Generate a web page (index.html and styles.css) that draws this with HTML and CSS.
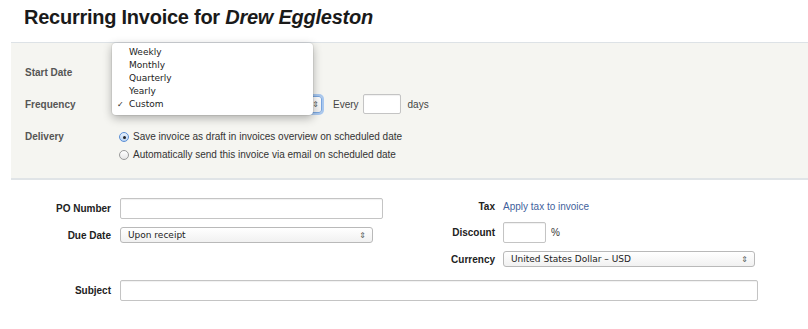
FILE: index.html
```html
<!DOCTYPE html>
<html lang="en">
<head>
  <meta charset="UTF-8">
  <title>Recurring Invoice for Drew Eggleston</title>
  <link rel="stylesheet" href="styles.css">
</head>
<body>

  <h1 class="title">Recurring Invoice for <em>Drew Eggleston</em></h1>

  <div class="schedule">
    <div class="row row-start">
      <span class="label">Start Date</span>
      <span class="date-ghost"></span>
    </div>
    <div class="row row-freq">
      <span class="label">Frequency</span>
      <span class="select select-freq"><span class="arrows">&#8661;</span></span>
      <span class="every">Every</span>
      <span class="input input-days"></span>
      <span class="days">days</span>
    </div>
    <div class="row row-delivery">
      <span class="label">Delivery</span>
      <div class="radios">
        <label class="radio"><span class="dot checked"></span>Save invoice as draft in invoices overview on scheduled date</label>
        <label class="radio"><span class="dot"></span>Automatically send this invoice via email on scheduled date</label>
      </div>
    </div>

    <ul class="menu">
      <li>Weekly</li>
      <li>Monthly</li>
      <li>Quarterly</li>
      <li>Yearly</li>
      <li class="current"><span class="check">&#10003;</span>Custom</li>
    </ul>
  </div>

  <div class="details">
    <div class="cols">
      <div class="col-left">
        <div class="field field-po">
          <span class="flabel">PO Number</span>
          <span class="input input-po"></span>
        </div>
        <div class="field field-due">
          <span class="flabel">Due Date</span>
          <span class="select select-due">Upon receipt<span class="arrows">&#8661;</span></span>
        </div>
      </div>
      <div class="col-right">
        <div class="field field-tax">
          <span class="flabel rlabel">Tax</span>
          <a class="link" href="#">Apply tax to invoice</a>
        </div>
        <div class="field field-discount">
          <span class="flabel rlabel">Discount</span>
          <span class="input input-discount"></span>
          <span class="pct">%</span>
        </div>
        <div class="field field-currency">
          <span class="flabel rlabel">Currency</span>
          <span class="select select-currency">United States Dollar &ndash; USD<span class="arrows">&#8661;</span></span>
        </div>
      </div>
    </div>
    <div class="field field-subject">
      <span class="flabel">Subject</span>
      <span class="input input-subject"></span>
    </div>
  </div>

</body>
</html>
```

FILE: styles.css
```css
body { margin: 0; font-family: "Liberation Sans", Arial, sans-serif; font-size: 10px; color: #333; background: #fff; width: 808px; height: 329px; overflow: hidden; }

.title { margin: 0; padding: 6px 0 0 24px; height: 36px; font-size: 20px; font-weight: bold; color: #1a1a1a; letter-spacing: -0.25px; }
.title em { font-style: italic; }

.schedule { position: relative; margin-left: 11px; height: 135px; background: #f5f5f1; border-top: 1px solid #dde2e6; border-bottom: 2px solid #e0e4e7; }
.row { display: flex; align-items: center; padding-left: 14px; }
.label { width: 93px; font-weight: bold; color: #555; flex: none; }
.row-start { height: 20px; margin-top: 19px; }
.date-ghost { width: 66px; height: 20px; background: #ececea; border-radius: 3px; }
.row-freq { height: 20px; margin-top: 12px; }
.row-delivery { align-items: flex-start; margin-top: 16px; }
.row-delivery .label { padding-top: 1px; }

.select { display: flex; align-items: center; justify-content: space-between; height: 15px; padding: 0 6px 0 7px; background: linear-gradient(#fff, #f1f1f1); border: 1px solid #b9b9b9; border-radius: 3px; font-family: "DejaVu Sans", sans-serif; font-size: 9px; color: #222; box-sizing: border-box; }
.arrows { font-size: 8px; color: #555; }
.select-freq { width: 204px; height: 17px; padding-right: 2px; justify-content: flex-end; border-color: #7aa7e0; box-shadow: 0 0 0 2px #a9c8ef; }
.every { margin-left: 11px; color: #444; }
.input { display: block; background: #fff; border: 1px solid #c4c4c4; border-radius: 2px; box-sizing: border-box; box-shadow: inset 0 1px 1px rgba(0,0,0,0.06); }
.input-days { width: 38px; height: 20px; margin-left: 4px; }
.days { margin-left: 7px; color: #444; }

.radios { display: flex; flex-direction: column; gap: 5px; }
.radio { display: flex; align-items: center; color: #333; line-height: 13px; }
.dot { width: 10px; height: 10px; margin: 0 4px 0 1px; border: 1px solid #9a9a9a; border-radius: 50%; background: linear-gradient(#fff, #e6e6e6); box-sizing: border-box; position: relative; }
.dot.checked { border-color: #5b8fd6; background: linear-gradient(#e6f0fc, #b9d3f3); }
.dot.checked::after { content: ""; position: absolute; left: 3px; top: 3px; width: 3px; height: 3px; border-radius: 50%; background: #222; }

.menu { position: absolute; left: 101px; top: 0; width: 201px; height: 72px; margin: 0; padding: 3px 0 0; list-style: none; background: #fff; border-radius: 4px; box-shadow: 0 3px 10px rgba(0,0,0,0.3), 0 0 0 1px rgba(0,0,0,0.06); box-sizing: border-box; font-family: "DejaVu Sans", sans-serif; font-size: 9px; color: #222; }
.menu li { display: flex; height: 13px; line-height: 13px; padding-left: 17px; }
.menu li.current { padding-left: 5px; }
.menu .check { width: 12px; font-size: 8px; }

.details { padding-top: 18px; }
.cols { display: flex; }
.col-left { width: 400px; }
.col-right { width: 400px; }
.field { display: flex; align-items: center; }
.flabel { width: 120px; padding-right: 9px; text-align: right; font-weight: bold; color: #222; box-sizing: border-box; flex: none; }
.rlabel { width: 103px; padding-right: 8px; }
.input-po { width: 263px; height: 21px; }
.field-due { margin-top: 8px; }
.select-due { width: 253px; height: 16px; }
.field-tax { height: 14px; margin-top: 1px; }
.link { color: #3f5f9c; text-decoration: none; }
.field-discount { margin-top: 9px; }
.input-discount { width: 43px; height: 21px; }
.pct { margin-left: 5px; color: #333; }
.field-currency { margin-top: 8px; }
.select-currency { width: 252px; height: 16px; }
.field-subject { margin-top: 13px; }
.input-subject { width: 638px; height: 21px; }
```
